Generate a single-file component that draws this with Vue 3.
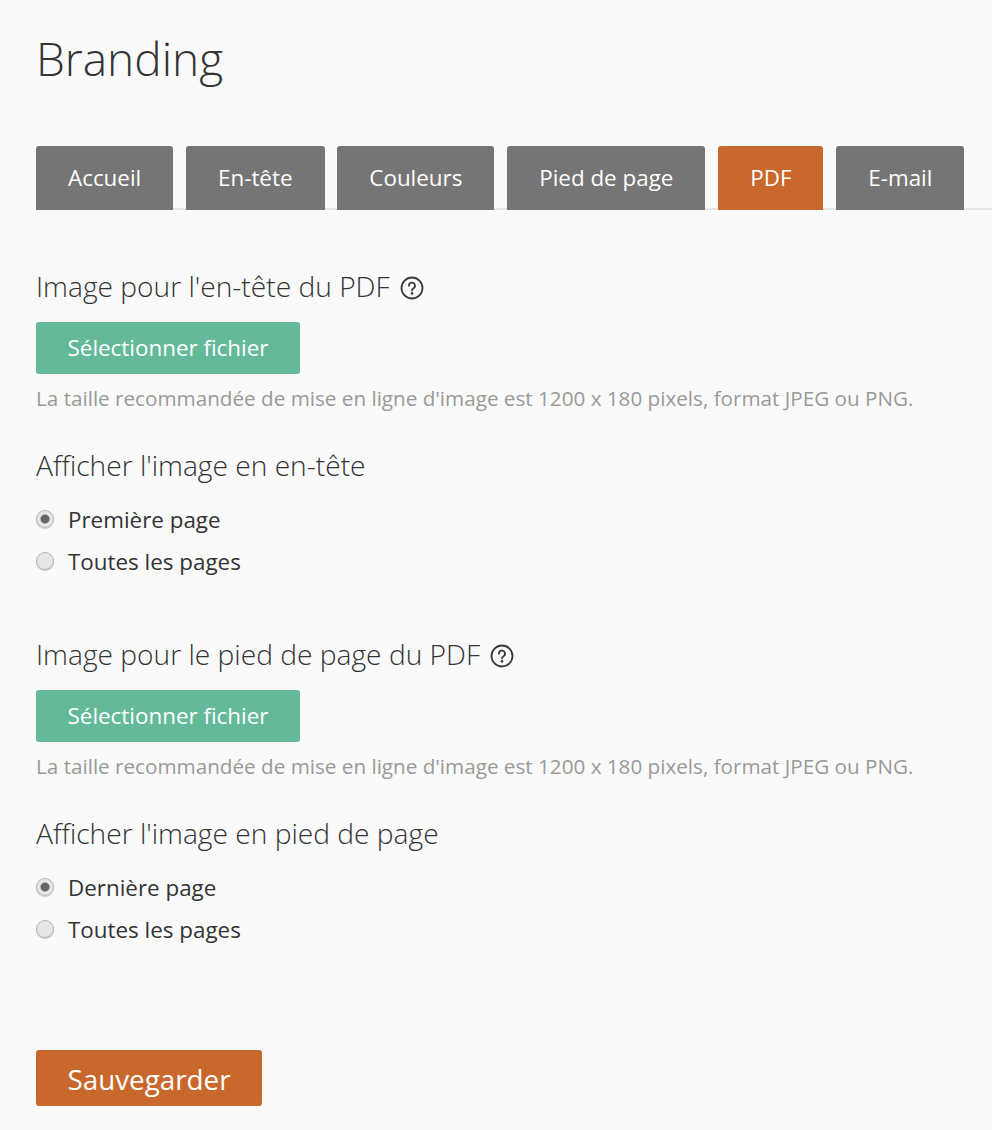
<script setup>
const tabs = ['Accueil', 'En-tête', 'Couleurs', 'Pied de page', 'PDF', 'E-mail']
const note = "La taille recommandée de mise en ligne d'image est 1200 x 180 pixels, format JPEG ou PNG."
const sections = [
  { title: "Image pour l'en-tête du PDF", sub: "Afficher l'image en en-tête", options: ['Première page', 'Toutes les pages'] },
  { title: 'Image pour le pied de page du PDF', sub: "Afficher l'image en pied de page", options: ['Dernière page', 'Toutes les pages'] },
]
</script>

<template>
  <div class="page">
    <h1>Branding</h1>
    <div class="tabs">
      <div v-for="t in tabs" :key="t" class="tab" :class="{ active: t === 'PDF' }">{{ t }}</div>
    </div>
    <div v-for="s in sections" :key="s.title" class="section">
      <div class="head">
        {{ s.title }}
        <svg class="help" width="24" height="24" viewBox="0 0 24 24" fill="none" stroke="#3a3a3a" stroke-width="1.8">
          <circle cx="12" cy="12" r="10.5" />
          <path d="M9 9.8a3 3 0 1 1 4.6 2.4c-1 .6-1.6 1.1-1.6 2.2" stroke-linecap="round" />
          <circle cx="12" cy="17.4" r="1.3" fill="#3a3a3a" stroke="none" />
        </svg>
      </div>
      <div class="upload">Sélectionner fichier</div>
      <div class="note">{{ note }}</div>
      <div class="head sub">{{ s.sub }}</div>
      <div class="radios">
        <div v-for="(o, i) in s.options" :key="o" class="radio-row">
          <span class="radio" :class="{ on: i === 0 }"></span>{{ o }}
        </div>
      </div>
    </div>
    <div class="save">Sauvegarder</div>
  </div>
</template>

<style>
html, body { background: #fafafa; }
</style>

<style scoped>
.page {
  height: 1130px;
  box-sizing: border-box;
  overflow: hidden;
  padding-top: 30px;
  padding-left: 36px;
  font-family: "Open Sans", sans-serif;
  color: #333;
}
h1 {
  margin: 0;
  font-size: 46px;
  line-height: 56px;
  font-weight: 300;
}
.tabs {
  display: flex;
  gap: 12.8px;
  margin-top: 60px;
  border-bottom: 2px solid #e6e6e6;
  height: 62px;
}
.tab {
  height: 64px;
  padding: 0 32px;
  line-height: 63px;
  font-size: 22.4px;
  color: #fff;
  background: #757575;
  border-radius: 3px 3px 0 0;
}
.tab.active { background: #c8682c; }
.section { padding-top: 56px; }
.section + .section { padding-top: 52px; }
.head {
  display: flex;
  align-items: center;
  gap: 10px;
  font-size: 28.16px;
  line-height: 40px;
  font-weight: 300;
}
.help { margin-top: 4px; }
.upload {
  width: 264px;
  height: 52px;
  margin-top: 16px;
  line-height: 52px;
  text-align: center;
  font-size: 22.4px;
  color: #fff;
  background: #64b998;
  border-radius: 3px;
}
.note {
  margin-top: 9px;
  font-size: 20.67px;
  line-height: 30px;
  color: #999;
}
.sub { margin-top: 32px; }
.radios { margin-top: 13px; }
.radio-row {
  display: flex;
  align-items: center;
  height: 42px;
  font-size: 22.4px;
}
.radio {
  width: 18px;
  height: 18px;
  box-sizing: border-box;
  margin-right: 14px;
  border: 1px solid #b4b4b4;
  border-radius: 50%;
  background: #e6e6e6;
  box-shadow: 0 1px 1px rgba(0, 0, 0, 0.2);
}
.radio.on { background: radial-gradient(circle, #666 0 4px, #e6e6e6 5px); }
.save {
  width: 226px;
  height: 56px;
  margin-top: 100px;
  line-height: 58px;
  text-align: center;
  font-size: 27.8px;
  color: #fff;
  background: #c8682c;
  border-radius: 3px;
}
</style>
